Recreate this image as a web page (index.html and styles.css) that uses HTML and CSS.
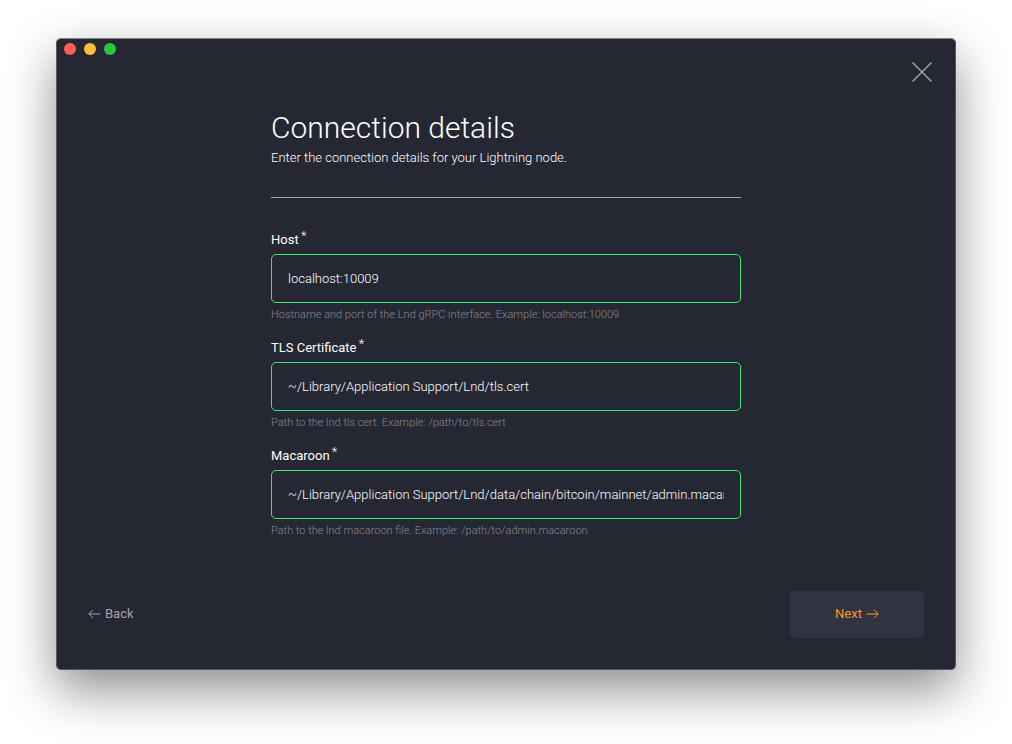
FILE: index.html
```html
<!DOCTYPE html>
<html lang="en">
<head>
<meta charset="utf-8">
<meta name="viewport" content="width=device-width, initial-scale=1">
<title>Connection details</title>
<link rel="stylesheet" href="styles.css">
</head>
<body>
<div class="window">
  <header class="titlebar">
    <div class="lights">
      <span class="light light-red"></span>
      <span class="light light-yellow"></span>
      <span class="light light-green"></span>
    </div>
    <button class="close" type="button" aria-label="Close">
      <svg width="20" height="20" viewBox="0 0 20 20" fill="none" stroke="currentColor" stroke-width="1.3"><path d="M.5.5l19 19M19.5.5l-19 19"/></svg>
    </button>
  </header>
  <form class="form">
    <main class="content">
      <h1 class="title">Connection details</h1>
      <p class="subtitle">Enter the connection details for your Lightning node.</p>
      <hr class="rule">
      <div class="field">
        <label class="label" for="host">Host <span class="required">*</span></label>
        <input class="input" id="host" type="text" value="localhost:10009" required>
        <p class="hint">Hostname and port of the Lnd gRPC interface. Example: localhost:10009</p>
      </div>
      <div class="field">
        <label class="label" for="cert">TLS Certificate <span class="required">*</span></label>
        <input class="input" id="cert" type="text" value="~/Library/Application Support/Lnd/tls.cert" required>
        <p class="hint">Path to the lnd tls cert. Example: /path/to/tls.cert</p>
      </div>
      <div class="field">
        <label class="label" for="macaroon">Macaroon <span class="required">*</span></label>
        <input class="input" id="macaroon" type="text" value="~/Library/Application Support/Lnd/data/chain/bitcoin/mainnet/admin.macaroon" required>
        <p class="hint">Path to the lnd macaroon file. Example: /path/to/admin.macaroon</p>
      </div>
    </main>
    <footer class="footer">
      <button class="back" type="button">
        <svg width="13" height="10" viewBox="0 0 13 10" fill="none" stroke="currentColor"><path d="M12.5 5H1M5 .8L.8 5 5 9.2"/></svg>
        Back
      </button>
      <button class="next" type="submit">
        Next
        <svg width="13" height="10" viewBox="0 0 13 10" fill="none" stroke="currentColor"><path d="M.5 5H12M8 .8L12.2 5 8 9.2"/></svg>
      </button>
    </footer>
  </form>
</div>
</body>
</html>
```

FILE: styles.css
```css
* {
  box-sizing: border-box;
}

body {
  display: flex;
  min-height: 100vh;
  margin: 0;
  padding: 38px 56px 74px;
  background: #fff;
  color: #fff;
  font-family: Roboto, "Liberation Sans", sans-serif;
  font-size: 13px;
  font-weight: 300;
  line-height: 16px;
}

.window {
  display: flex;
  flex: 1;
  flex-direction: column;
  min-width: 0;
  border: 1px solid #55565f;
  border-top-color: #85868d;
  border-radius: 5px;
  background: #252733;
  box-shadow: 0 20px 50px rgba(0, 0, 0, 0.45);
}

.titlebar {
  display: flex;
  align-items: flex-start;
  justify-content: space-between;
  padding: 4px 23px 0 7px;
}

.lights {
  display: flex;
  gap: 8px;
}

.light {
  width: 12px;
  height: 12px;
  border-radius: 50%;
}

.light-red {
  background: #ff5f57;
}

.light-yellow {
  background: #ffbd3e;
}

.light-green {
  background: #28c940;
}

.close {
  display: flex;
  margin-top: 19px;
  padding: 0;
  border: 0;
  background: none;
  color: #a9aab0;
}

.form {
  display: flex;
  flex: 1;
  flex-direction: column;
  justify-content: space-between;
  padding: 28px 31px 31px;
}

.content {
  width: 100%;
  max-width: 470px;
  margin: 0 auto;
}

.title {
  margin: 0;
  font-size: 30px;
  font-weight: 300;
  line-height: 36px;
}

.subtitle {
  margin: 4px 0 0;
}

.rule {
  height: 1px;
  margin: 31px 0 34px;
  border: 0;
  background: #a4a5ac;
}

.field + .field {
  margin-top: 18px;
}

.label {
  display: block;
  margin-bottom: 6px;
  font-weight: 400;
}

.required {
  display: inline-block;
  margin-left: -1px;
  font-weight: 300;
  line-height: 8px;
  vertical-align: 4px;
}

.input {
  display: block;
  width: 100%;
  height: 49px;
  padding: 0 16px;
  border: 1px solid #39e673;
  border-radius: 5px;
  outline: 0;
  background: transparent;
  color: #fff;
  font: inherit;
}

.hint {
  margin: 4px 0 0;
  color: #888990;
  font-size: 11px;
  line-height: 15px;
}

.footer {
  display: flex;
  align-items: flex-start;
  justify-content: space-between;
}

.back,
.next {
  display: flex;
  align-items: center;
  gap: 4px;
  padding: 15px 0 16px;
  border: 0;
  background: none;
  color: #a4a5ac;
  font: inherit;
  font-weight: 400;
}

.next {
  justify-content: center;
  min-width: 134px;
  border-radius: 5px;
  background: #313340;
  color: #f39a2b;
}
```
